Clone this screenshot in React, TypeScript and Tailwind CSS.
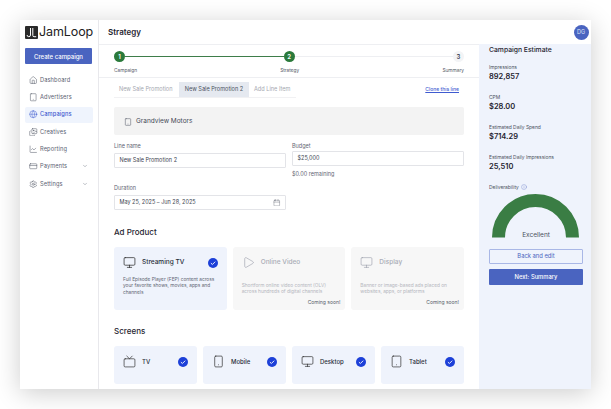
import { Calendar, ChartLine, ChevronDown, CreditCard, House, Images, Info, Monitor, Play, Settings, Smartphone, Tablet, Tv, Globe } from "lucide-react";

const font = "font-['Inter','Liberation_Sans',sans-serif]";

const nav = [
  { label: "Dashboard", icon: House },
  { label: "Advertisers", icon: Tablet },
  { label: "Campaigns", icon: Globe, active: true },
  { label: "Creatives", icon: Images },
  { label: "Reporting", icon: ChartLine },
  { label: "Payments", icon: CreditCard, more: true },
  { label: "Settings", icon: Settings, more: true },
];

const stats = [
  { label: "Impressions", value: "892,857" },
  { label: "CPM", value: "$28.00" },
  { label: "Estimated Daily Spend", value: "$714.29" },
  { label: "Estimated Daily Impressions", value: "25,510" },
];

const screens = [
  { label: "TV", icon: Tv },
  { label: "Mobile", icon: Smartphone },
  { label: "Desktop", icon: Monitor },
  { label: "Tablet", icon: Tablet },
];

const CheckBadge = () => (
  <svg width="10" height="10" viewBox="0 0 10 10" className="shrink-0">
    <circle cx="5" cy="5" r="5" fill="#1d40d8" />
    <path d="M2.9 5.1l1.5 1.4 2.8-2.8" fill="none" stroke="white" strokeWidth="0.9" />
  </svg>
);

const Step = (props: { n: number; done?: boolean }) => (
  <div
    className={`w-[11px] h-[11px] rounded-full flex items-center justify-center text-[6px] font-semibold shrink-0 ${
      props.done ? "bg-[#2b7a3b] text-white" : "bg-[#f3f4f6] text-[#374151]"
    }`}
  >
    {props.n}
  </div>
);

export default function App() {
  return (
    <div className={`${font} w-[611px] h-[409px] bg-white overflow-hidden pt-5 pl-5`}>
      <div className="w-[571px] h-[369px] bg-white flex shadow-[0_4px_24px_rgba(0,0,0,0.2)]">
        {/* Sidebar */}
        <div className="w-[79px] border-r border-[#e8e8ec] px-[5px] pt-[5px] shrink-0">
          <div className="flex items-center h-[15px]">
            <svg width="13" height="13" viewBox="0 0 13 13" className="shrink-0">
              <rect width="13" height="13" rx="1" fill="#2a2a2a" />
              <path d="M5.5 2v7a1.7 1.7 0 0 1-3.4 0M7.8 2v7.5a1.2 1.2 0 0 0 1.2 1.2h2.2" fill="none" stroke="white" strokeWidth="1" />
            </svg>
            <span className="ml-[1px] text-[12.5px] leading-none text-[#222] tracking-[-0.1px]">JamLoop</span>
          </div>
          <div className="mt-[8px] h-[16px] w-[67px] bg-[#4a64c0] rounded-[1px] flex items-center justify-center text-white text-[6px] font-medium">
            Create campaign
          </div>
          <div className="mt-[8px] flex flex-col gap-[1.3px]">
            {nav.map((item) => (
              <div
                key={item.label}
                className={`h-[16px] flex items-center gap-[2.5px] pl-[4px] pr-[5px] rounded-[2px] text-[5.7px] ${
                  item.active ? "bg-[#eff4fd] text-[#3f5bd0] font-medium" : "text-[#5b6272]"
                }`}
              >
                <item.icon size={8.5} strokeWidth={1.4} className={item.active ? "" : "text-[#4b5160]"} />
                <span className="flex-1 tracking-[0.1px]">{item.label}</span>
                {item.more && <ChevronDown size={6} strokeWidth={1.6} />}
              </div>
            ))}
          </div>
        </div>

        <div className="flex-1 flex flex-col min-w-0">
          {/* Header */}
          <div className="h-[24px] flex items-center justify-between pl-[9px] pr-[2.5px] shrink-0">
            <span className="text-[8px] font-semibold text-[#1f2430]">Strategy</span>
            <div className="w-[15px] h-[15px] rounded-full bg-[#4a64c0] text-[#dfe5f7] text-[5.5px] flex items-center justify-center">DG</div>
          </div>

          <div className="flex-1 flex min-h-0">
            {/* Main */}
            <div className="w-[380px] shrink-0 overflow-hidden">
              <div className="border-y border-y-[#eeeff2] h-[34px] px-[15px] pt-[6px]">
                <div className="flex items-center">
                  <Step n={1} done />
                  <div className="flex-1 h-[1px] bg-[#3e7d4a]" />
                  <Step n={2} done />
                  <div className="flex-1 h-[1px] bg-[#eeeff2]" />
                  <Step n={3} />
                </div>
                <div className="flex justify-between text-[4.8px] text-[#555b68] mt-[4.5px]">
                  <span>Campaign</span>
                  <span>Strategy</span>
                  <span>Summary</span>
                </div>
              </div>

              <div className="px-[15px]">
                {/* Tabs */}
                <div className="flex items-center justify-between pt-[4px]">
                  <div className="flex h-[16px] w-[182px] border-b border-[#f1f1f3] text-[5.6px] text-[#a5a8b0]">
                    <div className="px-[5px] w-[65px] flex items-center whitespace-nowrap">New Sale Promotion</div>
                    <div className="w-[70px] flex items-center justify-center bg-[#e5e9f0] text-[#4b5160] whitespace-nowrap">New Sale Promotion 2</div>
                    <div className="px-[5px] flex items-center whitespace-nowrap">Add Line Item</div>
                  </div>
                  <a className="text-[5px] font-medium text-[#3f5bd0] underline pr-[5px]">Clone this line</a>
                </div>

                {/* Advertiser */}
                <div className="mt-[9px] h-[28px] bg-[#f3f3f3] rounded-[2px] flex items-center gap-[4px] pl-[10px] pt-[1px] text-[6.5px] text-[#444a58]">
                  <Tablet size={8} strokeWidth={1.4} />
                  Grandview Motors
                </div>

                {/* Form */}
                <div className="grid grid-cols-2 gap-x-[6px] mt-[6px] text-[5.5px] text-[#5f6573]">
                  <div>
                    <div className="h-[12px] leading-[6px] pt-[2px]">Line name</div>
                    <div className="h-[15px] border border-[#e3e4e8] rounded-[1px] flex items-center pl-[4.5px] text-[#3d4350]">New Sale Promotion 2</div>
                  </div>
                  <div>
                    <div className="h-[10px] leading-[6px] pt-[2px]">Budget</div>
                    <div className="h-[15px] border border-[#e3e4e8] rounded-[1px] flex items-center pl-[4.5px] text-[#3d4350]">$25,000</div>
                    <div className="mt-[5px] leading-[6px]">$0.00 remaining</div>
                  </div>
                  <div className="mt-[8px]">
                    <div className="h-[10px] leading-[6px]">Duration</div>
                    <div className="h-[15px] border border-[#e3e4e8] rounded-[1px] flex items-center justify-between px-[4.5px] text-[#3d4350]">
                      May 25, 2025 – Jun 28, 2025
                      <Calendar size={7.5} strokeWidth={1.2} className="text-[#555b68]" />
                    </div>
                  </div>
                </div>

                {/* Ad product */}
                <h2 className="mt-[15px] h-[14px] text-[8px] font-medium text-[#1f2430] leading-[14px]">Ad Product</h2>
                <div className="grid grid-cols-3 gap-x-[6px] mt-[8px]">
                  <div className="h-[63px] bg-[#eff3fc] rounded-[3px] px-[9px] pt-[9px]">
                    <div className="flex items-center h-[13px]">
                      <Monitor size={13} strokeWidth={1.3} className="text-[#222]" />
                      <span className="ml-[6px] flex-1 text-[6.5px] font-medium text-[#2a2f3b]">Streaming TV</span>
                      <CheckBadge />
                    </div>
                    <p className="mt-[7px] text-[4.8px] leading-[6.4px] text-[#5f6573]">
                      Full Episode Player (FEP) content across your favorite shows, movies, apps and channels
                    </p>
                  </div>
                  <div className="h-[63px] bg-[#f7f7f7] rounded-[3px] px-[9px] pt-[9px] relative">
                    <div className="flex items-center h-[13px]">
                      <Play size={13} strokeWidth={1} className="text-[#8e92a0]" />
                      <span className="ml-[6px] text-[6.5px] font-medium text-[#a9acb6]">Online Video</span>
                    </div>
                    <p className="mt-[13px] text-[4.8px] leading-[6.4px] text-[#b4b6bd]">
                      Shortform online video content (OLV) across hundreds of digital channels
                    </p>
                    <span className="absolute right-[5px] bottom-[4px] text-[5px] text-[#555b68]">Coming soon!</span>
                  </div>
                  <div className="h-[63px] bg-[#f7f7f7] rounded-[3px] px-[9px] pt-[9px] relative">
                    <div className="flex items-center h-[13px]">
                      <Monitor size={13} strokeWidth={1} className="text-[#8e92a0]" />
                      <span className="ml-[6px] text-[6.5px] font-medium text-[#a9acb6]">Display</span>
                    </div>
                    <p className="mt-[13px] text-[4.8px] leading-[6.4px] text-[#b4b6bd]">
                      Banner or image-based ads placed on websites, apps, or platforms
                    </p>
                    <span className="absolute right-[5px] bottom-[4px] text-[5px] text-[#555b68]">Coming soon!</span>
                  </div>
                </div>

                {/* Screens */}
                <h2 className="mt-[14px] h-[14px] text-[8px] font-medium text-[#1f2430] leading-[15px]">Screens</h2>
                <div className="grid grid-cols-4 gap-x-[6px] mt-[8px]">
                  {screens.map((s) => (
                    <div key={s.label} className="h-[38px] bg-[#eff3fc] rounded-[3px] flex items-start px-[9px] pt-[9px]">
                      <s.icon size={13} strokeWidth={1.2} className="text-[#222] shrink-0" />
                      <span className="ml-[6px] flex-1 text-[6px] font-medium text-[#2a2f3b] leading-[13px]">{s.label}</span>
                      <div className="pt-[1.5px]"><CheckBadge /></div>
                    </div>
                  ))}
                </div>
              </div>
            </div>

            {/* Estimate panel */}
            <div className="w-[112px] shrink-0 bg-[#eff3fc] pl-[10px] pr-[8px] pt-[2px]">
              <div className="text-[6.8px] font-medium text-[#1f2430] leading-[8px]">Campaign Estimate</div>
              <div className="mt-[9px] flex flex-col gap-[10px]">
                {stats.map((s) => (
                  <div key={s.label}>
                    <div className="text-[4.9px] leading-[8px] text-[#4b5160]">{s.label}</div>
                    <div className="text-[7.5px] leading-[12px] font-semibold text-[#1f2430]">{s.value}</div>
                  </div>
                ))}
              </div>
              <div className="mt-[9.5px] flex items-center gap-[2px] text-[4.9px] leading-[8px] text-[#4b5160]">
                Deliverability
                <Info size={6} strokeWidth={1.2} className="text-[#4a64c0]" />
              </div>
              <div className="relative mt-[3.5px] h-[44px]">
                <svg width="94" height="44" viewBox="0 0 94 44" className="block">
                  <path d="M9.5 43.5a37 37 0 0 1 74 0" fill="none" stroke="#3a7d44" strokeWidth="13" />
                </svg>
                <div className="absolute left-0 w-[94px] bottom-[-3px] text-center text-[6.5px] text-[#4b5160]">Excellent</div>
              </div>
              <div className="mt-[11px] h-[15px] border border-[#a9b7e6] rounded-[1px] flex items-center justify-center text-[5.8px] text-[#4a64c0]">Back and edit</div>
              <div className="mt-[5px] h-[16px] bg-[#4a64c0] rounded-[1px] flex items-center justify-center text-[5.8px] font-medium text-white">Next: Summary</div>
            </div>
          </div>
        </div>
      </div>
    </div>
  );
}
